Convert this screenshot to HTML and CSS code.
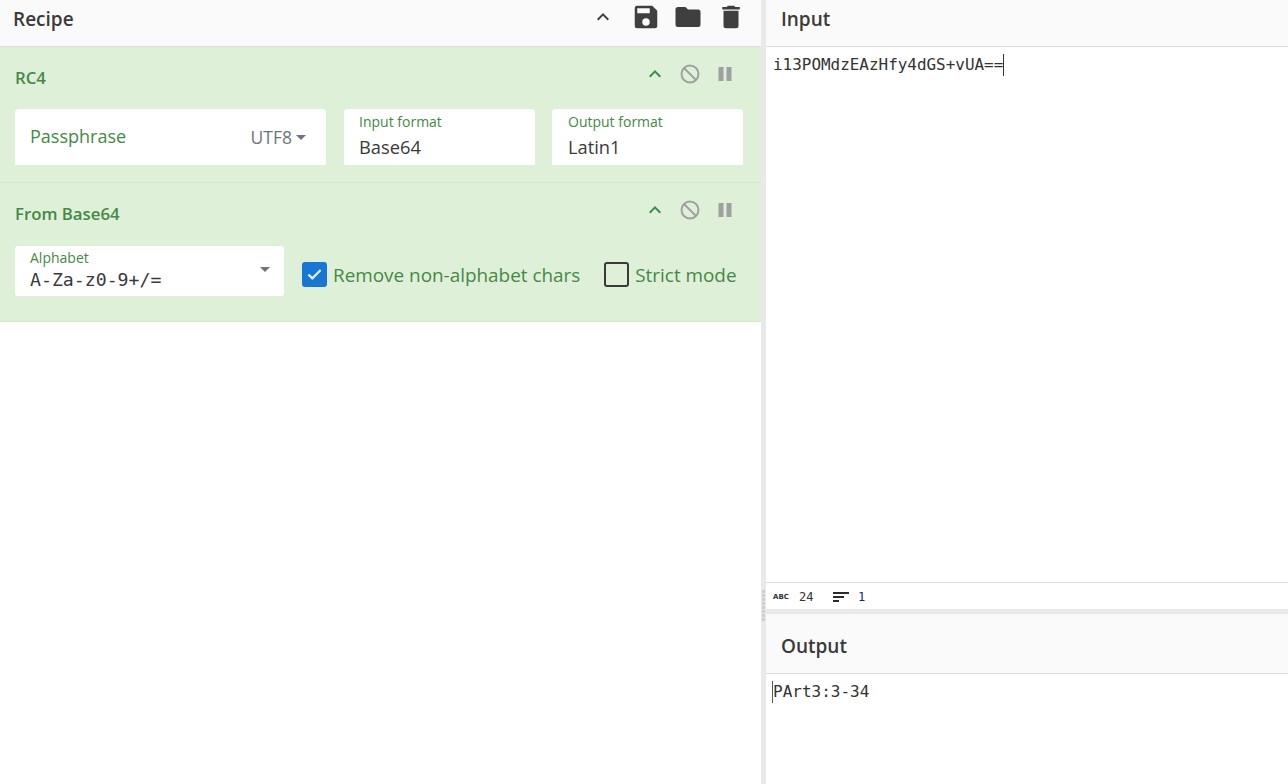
FILE: index.html
```html
<!DOCTYPE html>
<html lang="en">
<head>
<meta charset="utf-8">
<title>Recipe</title>
<link rel="stylesheet" href="styles.css">
</head>
<body>
<div class="app">
  <section class="recipe">
    <header class="title recipe-title">
      <h2>Recipe</h2>
      <div class="tools">
        <svg class="chev-big" viewBox="0 0 24 24" width="24" height="24"><path d="M7.41 15.41 12 10.83l4.59 4.58L18 14l-6-6-6 6z"/></svg>
        <svg viewBox="0 0 24 24" width="30" height="30"><path d="M17 3H5a2 2 0 0 0-2 2v14a2 2 0 0 0 2 2h14a2 2 0 0 0 2-2V7l-4-4zm-5 16a3 3 0 1 1 0-6 3 3 0 0 1 0 6zm3-10H5V5h10v4z"/></svg>
        <svg viewBox="0 0 24 24" width="30" height="30"><path d="M10 4H4a2 2 0 0 0-2 2v12a2 2 0 0 0 2 2h16a2 2 0 0 0 2-2V8a2 2 0 0 0-2-2h-8l-2-2z"/></svg>
        <svg class="trash" viewBox="0 0 24 24" width="30" height="30"><path d="M6 19a2 2 0 0 0 2 2h8a2 2 0 0 0 2-2V7H6v12zM19 4h-3.500l-1-1h-5l-1 1H5v2h14V4z"/></svg>
      </div>
    </header>

    <article class="op op-rc4">
      <div class="op-head">
        <h3>RC4</h3>
        <div class="op-tools">
          <svg class="op-chev" viewBox="0 0 24 24" width="24" height="24"><path d="M7.41 15.41 12 10.83l4.59 4.58L18 14l-6-6-6 6z"/></svg>
          <svg class="op-ban" viewBox="0 0 24 24" width="24" height="24"><circle cx="12" cy="12" r="8.500"/><path d="M6 6l12 12"/></svg>
          <svg class="op-pause" viewBox="0 0 24 24" width="24" height="24"><path d="M5.500 5h5v14h-5zM13.500 5h5v14h-5z"/></svg>
        </div>
      </div>
      <div class="fields">
        <div class="field pass">
          <span class="pass-label">Passphrase</span>
          <span class="enc">UTF8<i class="caret"></i></span>
        </div>
        <div class="field fmt">
          <label>Input format</label>
          <span class="val">Base64</span>
        </div>
        <div class="field fmt">
          <label>Output format</label>
          <span class="val">Latin1</span>
        </div>
      </div>
    </article>

    <article class="op op-b64">
      <div class="op-head">
        <h3>From Base64</h3>
        <div class="op-tools">
          <svg class="op-chev" viewBox="0 0 24 24" width="24" height="24"><path d="M7.41 15.41 12 10.83l4.59 4.58L18 14l-6-6-6 6z"/></svg>
          <svg class="op-ban" viewBox="0 0 24 24" width="24" height="24"><circle cx="12" cy="12" r="8.500"/><path d="M6 6l12 12"/></svg>
          <svg class="op-pause" viewBox="0 0 24 24" width="24" height="24"><path d="M5.500 5h5v14h-5zM13.500 5h5v14h-5z"/></svg>
        </div>
      </div>
      <div class="fields fields-b64">
        <div class="field alpha">
          <label>Alphabet</label>
          <span class="val mono">A-Za-z0-9+/=</span>
          <i class="caret alpha-caret"></i>
        </div>
        <div class="check on">
          <span class="box"><svg viewBox="0 0 24 24" width="22" height="22"><path d="M5 12.500l4.500 4.500L19 7.500" fill="none" stroke="#dff0f8" stroke-width="2.600"/></svg></span>
          <span class="check-text">Remove non-alphabet chars</span>
        </div>
        <div class="check">
          <span class="box"></span>
          <span class="check-text">Strict mode</span>
        </div>
      </div>
    </article>
  </section>

  <div class="gutter-v"><i></i><i></i><i></i><i></i><i></i><i></i><i></i><i></i></div>

  <section class="io">
    <header class="title"><h2>Input</h2></header>
    <div class="text input-text"><span class="typed">i13POMdzEAzHfy4dGS+vUA==</span></div>
    <footer class="status">
      <span class="stat-abc">ABC</span><span class="stat-num first">24</span>
      <svg class="stat-lines" viewBox="0 0 16 12" width="16" height="12"><path d="M0 1h16v2H0zM0 5h11v2H0zM0 9h6v2H0z"/></svg><span class="stat-num blue">1</span>
    </footer>
    <div class="gutter-h"></div>
    <header class="title out-title"><h2>Output</h2></header>
    <div class="text output-text"><span class="typed-out">PArt3:3-34</span></div>
  </section>
</div>
</body>
</html>
```

FILE: styles.css
```css
* { box-sizing: border-box; }
html, body { margin: 0; height: 100%; background: #fff; overflow: hidden; }
body { font-family: "Open Sans", "Noto Sans", sans-serif; color: #3a3a3a; }
.app { display: flex; width: 1288px; height: 784px; }

.recipe { width: 761px; flex: none; display: flex; flex-direction: column; }
.gutter-v { width: 5px; flex: none; background: #e9e9e9; display: flex; flex-direction: column; align-items: center; justify-content: center; gap: 1px; padding-top: 427px; }
.gutter-v i { width: 3px; height: 3px; background: #cfcfcf; display: block; }
.io { flex: 1; display: flex; flex-direction: column; min-width: 0; }

.title { height: 47px; flex: none; background: #fafafa; border-bottom: 1px solid #dddddd; display: flex; align-items: center; justify-content: space-between; padding: 0 15px; }
.recipe-title { padding: 0 13px; }
.title h2 { margin: 0; font-size: 19px; font-weight: 600; line-height: 24px; color: #3a3a3a; position: relative; top: -4px; }
.tools { display: flex; align-items: center; gap: 12px; padding-right: 2px; position: relative; top: -6px; }
.tools svg { fill: #3f3f3f; display: block; }
.chev-big { margin-right: 4px; }
.tools .trash { margin-left: 1px; }

.op { background: #dff0d8; border-bottom: 1px solid #d4e8c9; padding: 0 15px; flex: none; }
.op-rc4 { height: 136px; }
.op-b64 { height: 139px; }
.op-head { display: flex; justify-content: space-between; height: 62px; }
.op-b64 .op-head { height: 63px; }
.op h3 { margin: 0; font-size: 16.800px; font-weight: 600; line-height: 22px; color: #468847; padding-top: 20px; }
.op-tools { display: flex; gap: 11px; padding-top: 15px; padding-right: 9px; height: 39px; }
.op-tools svg { display: block; }
.op-chev { fill: #3c8a48; }
.op-ban { fill: none; stroke: #a0a0a0; stroke-width: 2; }
.op-pause { fill: #a0a0a0; }

.fields { display: flex; gap: 18px; }
.field { background: #fff; border-radius: 4px 4px 0 0; height: 56px; position: relative; padding: 4px 15px 0; }
.pass { width: 311px; display: flex; align-items: center; justify-content: space-between; padding: 0 20px 0 15px; }
.pass-label { font-size: 18px; color: #468847; position: relative; top: -1px; }
.enc { font-size: 17.500px; color: #6c757d; display: flex; align-items: center; gap: 4px; position: relative; }
.caret { display: block; width: 0; height: 0; border-left: 5px solid transparent; border-right: 5px solid transparent; border-top: 5px solid #6c757d; }
.fmt { width: 191px; }
.field label { display: block; font-size: 14px; line-height: 18px; color: #468847; }
.val { display: block; font-size: 18.300px; line-height: 25px; margin-top: 3px; color: #3a3a3a; }
.fmt + .fmt { margin-left: -1px; padding-left: 16px; }

.fields-b64 { align-items: center; gap: 0; }
.alpha { width: 269px; height: 50px; border-radius: 3px; margin-right: 18px; padding-top: 3px; }
.alpha .val { margin-top: 2px; line-height: 22px; font-size: 18.200px; }
.mono { font-family: "DejaVu Sans Mono", "Liberation Mono", monospace; }
.alpha-caret { position: absolute; right: 14px; top: 21px; }

.check { display: flex; align-items: center; gap: 6px; font-size: 18.900px; color: #468847; line-height: 26px; position: relative; top: 3px; white-space: nowrap; }
.check.on { margin-right: 24px; }
.check-text { position: relative; top: 1px; }
.box { width: 25px; height: 25px; border: 2px solid #3a3a3a; border-radius: 3px; display: flex; align-items: center; justify-content: center; flex: none; }
.on .box { background: #1976d2; border-color: #1976d2; }

.text { font-family: "DejaVu Sans Mono", "Liberation Mono", monospace; font-size: 16px; line-height: 22px; color: #333; padding: 7px 0 0 7px; }
.input-text { height: 536px; flex: none; border-bottom: 1px solid #dddddd; font-size: 15.950px; }
.typed { border-right: 1px solid #333; display: inline-block; height: 22px; }

.status { height: 26px; flex: none; display: flex; align-items: center; padding: 2px 0 0 7px; background: #fff; font-family: "DejaVu Sans Mono", monospace; color: #333; }
.stat-abc { font-size: 7px; font-weight: 700; width: 26px; font-family: "DejaVu Sans", sans-serif; }
.stat-num { font-size: 12px; }
.stat-num.first { width: 34px; }
.stat-num.blue { color: #1a237e; margin-left: 9px; }
.stat-lines { fill: #2b2b2b; }
.gutter-h { height: 5px; flex: none; background: #e9e9e9; }
.out-title { height: 60px; }
.out-title h2 { top: 2px; }
.output-text { flex: 1; padding: 7px 0 0 6px; }
.typed-out { border-left: 1px solid #555; display: inline-block; height: 22px; }
```
